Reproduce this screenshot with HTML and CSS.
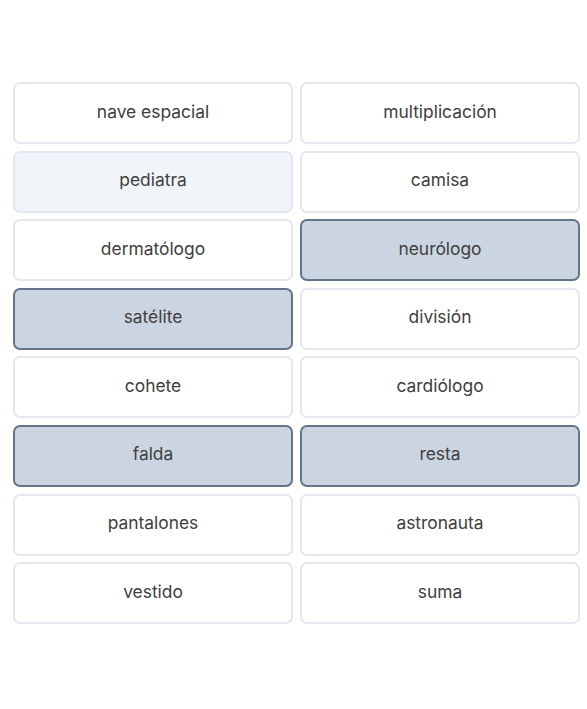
FILE: index.html
```html
<!DOCTYPE html>
<html lang="es">
<head>
  <meta charset="UTF-8" />
  <meta name="viewport" content="width=device-width, initial-scale=1.0"/>
  <title>Emparejar palabras</title>
  <link rel="stylesheet" href="styles.css">
</head>
<body>
<div class="board">
  <button class="tile">nave espacial</button>
  <button class="tile">multiplicación</button>
  <button class="tile hover">pediatra</button>
  <button class="tile">camisa</button>
  <button class="tile">dermatólogo</button>
  <button class="tile selected">neurólogo</button>
  <button class="tile selected">satélite</button>
  <button class="tile">división</button>
  <button class="tile">cohete</button>
  <button class="tile">cardiólogo</button>
  <button class="tile selected">falda</button>
  <button class="tile selected">resta</button>
  <button class="tile">pantalones</button>
  <button class="tile">astronauta</button>
  <button class="tile">vestido</button>
  <button class="tile">suma</button>
</div>
</body>
</html>
```

FILE: styles.css
```css
body {
  margin: 0;
  font-family: 'Inter', 'Noto Sans', sans-serif;
  background: #fff;
}
.board {
  display: grid;
  grid-template-columns: 280px 280px;
  grid-auto-rows: 62px;
  column-gap: 7px;
  row-gap: 6.6px;
  padding: 82px 0 0 13px;
}
.tile {
  font-family: inherit;
  font-size: 17.4px;
  color: #404040;
  background: #fff;
  border: 2px solid #e2e8f0;
  border-radius: 7px;
  padding: 0 0 4px;
  cursor: pointer;
}
.tile.hover {
  background: #f1f5f9;
}
.tile.selected {
  background: #cbd5e1;
  border-color: #64748b;
}
```
